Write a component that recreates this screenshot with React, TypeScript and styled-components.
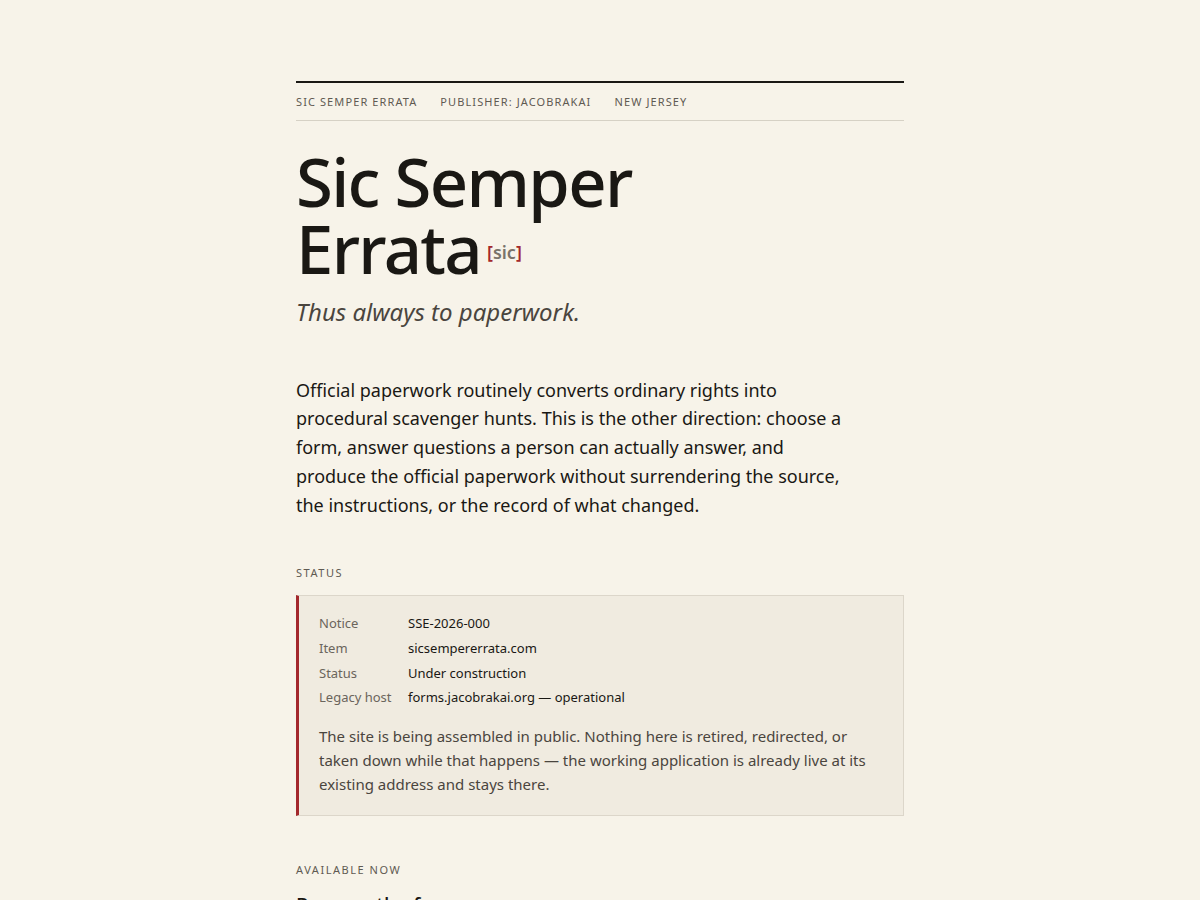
import styled, { createGlobalStyle } from 'styled-components';

type StatusRow = { label: string; value: string };

const statusRows: StatusRow[] = [
  { label: 'Notice', value: 'SSE-2026-000' },
  { label: 'Item', value: 'sicsempererrata.com' },
  { label: 'Status', value: 'Under construction' },
  { label: 'Legacy host', value: 'forms.jacobrakai.org — operational' },
];

const mastheadItems = ['Sic Semper Errata', 'Publisher: jacobrakai', 'New Jersey'];

export default function App() {
  return (
    <>
      <GlobalStyle />
      <Page>
        <Masthead>
          {mastheadItems.map((item) => (
            <MastheadItem key={item}>{item}</MastheadItem>
          ))}
        </Masthead>

        <Title>
          Sic Semper
          <br />
          Errata
          <Sic>
            <Bracket>[</Bracket>sic<Bracket>]</Bracket>
          </Sic>
        </Title>
        <Tagline>Thus always to paperwork.</Tagline>

        <Lede>
          Official paperwork routinely converts ordinary rights into procedural scavenger hunts.
          This is the other direction: choose a form, answer questions a person can actually
          answer, and produce the official paperwork without surrendering the source, the
          instructions, or the record of what changed.
        </Lede>

        <SectionLabel>Status</SectionLabel>
        <Notice>
          <NoticeTable>
            {statusRows.map((row) => (
              <NoticeRow key={row.label}>
                <NoticeLabel>{row.label}</NoticeLabel>
                <NoticeValue>{row.value}</NoticeValue>
              </NoticeRow>
            ))}
          </NoticeTable>
          <NoticeText>
            The site is being assembled in public. Nothing here is retired, redirected, or taken
            down while that happens — the working application is already live at its existing
            address and stays there.
          </NoticeText>
        </Notice>

        <SectionLabel>Available now</SectionLabel>
        <FormHeading>Prepare the form</FormHeading>
      </Page>
    </>
  );
}

const GlobalStyle = createGlobalStyle`
  html, body {
    margin: 0;
    padding: 0;
    background: #f7f3e9;
    color: #1a1814;
    font-family: "Noto Sans", "Open Sans", sans-serif;
  }
`;

const Page = styled.main`
  width: 608px;
  margin: 0 auto;
  padding-top: 81px;
`;

const Masthead = styled.nav`
  display: flex;
  gap: 23px;
  border-top: 2px solid #1a1814;
  border-bottom: 1px solid #d6d1c5;
  padding: 11px 0 10px;
`;

const MastheadItem = styled.span`
  font-size: 11px;
  line-height: 16px;
  letter-spacing: 0.1em;
  text-transform: uppercase;
  color: #5f5a52;
`;

const Title = styled.h1`
  margin: 27px 0 0;
  font-size: 67px;
  font-weight: 500;
  line-height: 67px;
  letter-spacing: -0.025em;
  color: #1a1814;
`;

const Sic = styled.span`
  margin-left: 6px;
  font-size: 18px;
  font-weight: 600;
  letter-spacing: 0;
  color: #7a746b;
  vertical-align: 0.85em;
`;

const Bracket = styled.span`
  color: #a3282c;
`;

const Tagline = styled.p`
  margin: 10px 0 0;
  font-size: 24px;
  font-style: italic;
  line-height: 32px;
  color: #4a453e;
`;

const Lede = styled.p`
  margin: 48px 0 0;
  max-width: 550px;
  font-size: 18px;
  line-height: 28.7px;
  color: #1a1814;
  text-wrap: pretty;
`;

const SectionLabel = styled.h2`
  margin: 46px 0 0;
  font-size: 11px;
  font-weight: 400;
  line-height: 16px;
  letter-spacing: 0.14em;
  text-transform: uppercase;
  color: #5f5a52;
`;

const Notice = styled.section`
  margin-top: 14px;
  padding: 15px 20px 19px;
  background: #f0ebe0;
  border: 1px solid #dcd6ca;
  border-left: 3px solid #a3282c;
`;

const NoticeTable = styled.dl`
  display: grid;
  grid-template-columns: 89px 1fr;
  margin: 0;
`;

const NoticeRow = styled.div`
  display: contents;
`;

const NoticeLabel = styled.dt`
  font-size: 13px;
  line-height: 24.7px;
  color: #6b655c;
`;

const NoticeValue = styled.dd`
  margin: 0;
  font-size: 13px;
  line-height: 24.7px;
  color: #1a1814;
`;

const NoticeText = styled.p`
  margin: 14px 0 0;
  font-size: 15px;
  line-height: 24px;
  color: #4a453e;
`;

const FormHeading = styled.h3`
  margin: 13px 0 0;
  font-size: 20px;
  font-weight: 500;
  line-height: 28px;
  color: #1a1814;
`;
